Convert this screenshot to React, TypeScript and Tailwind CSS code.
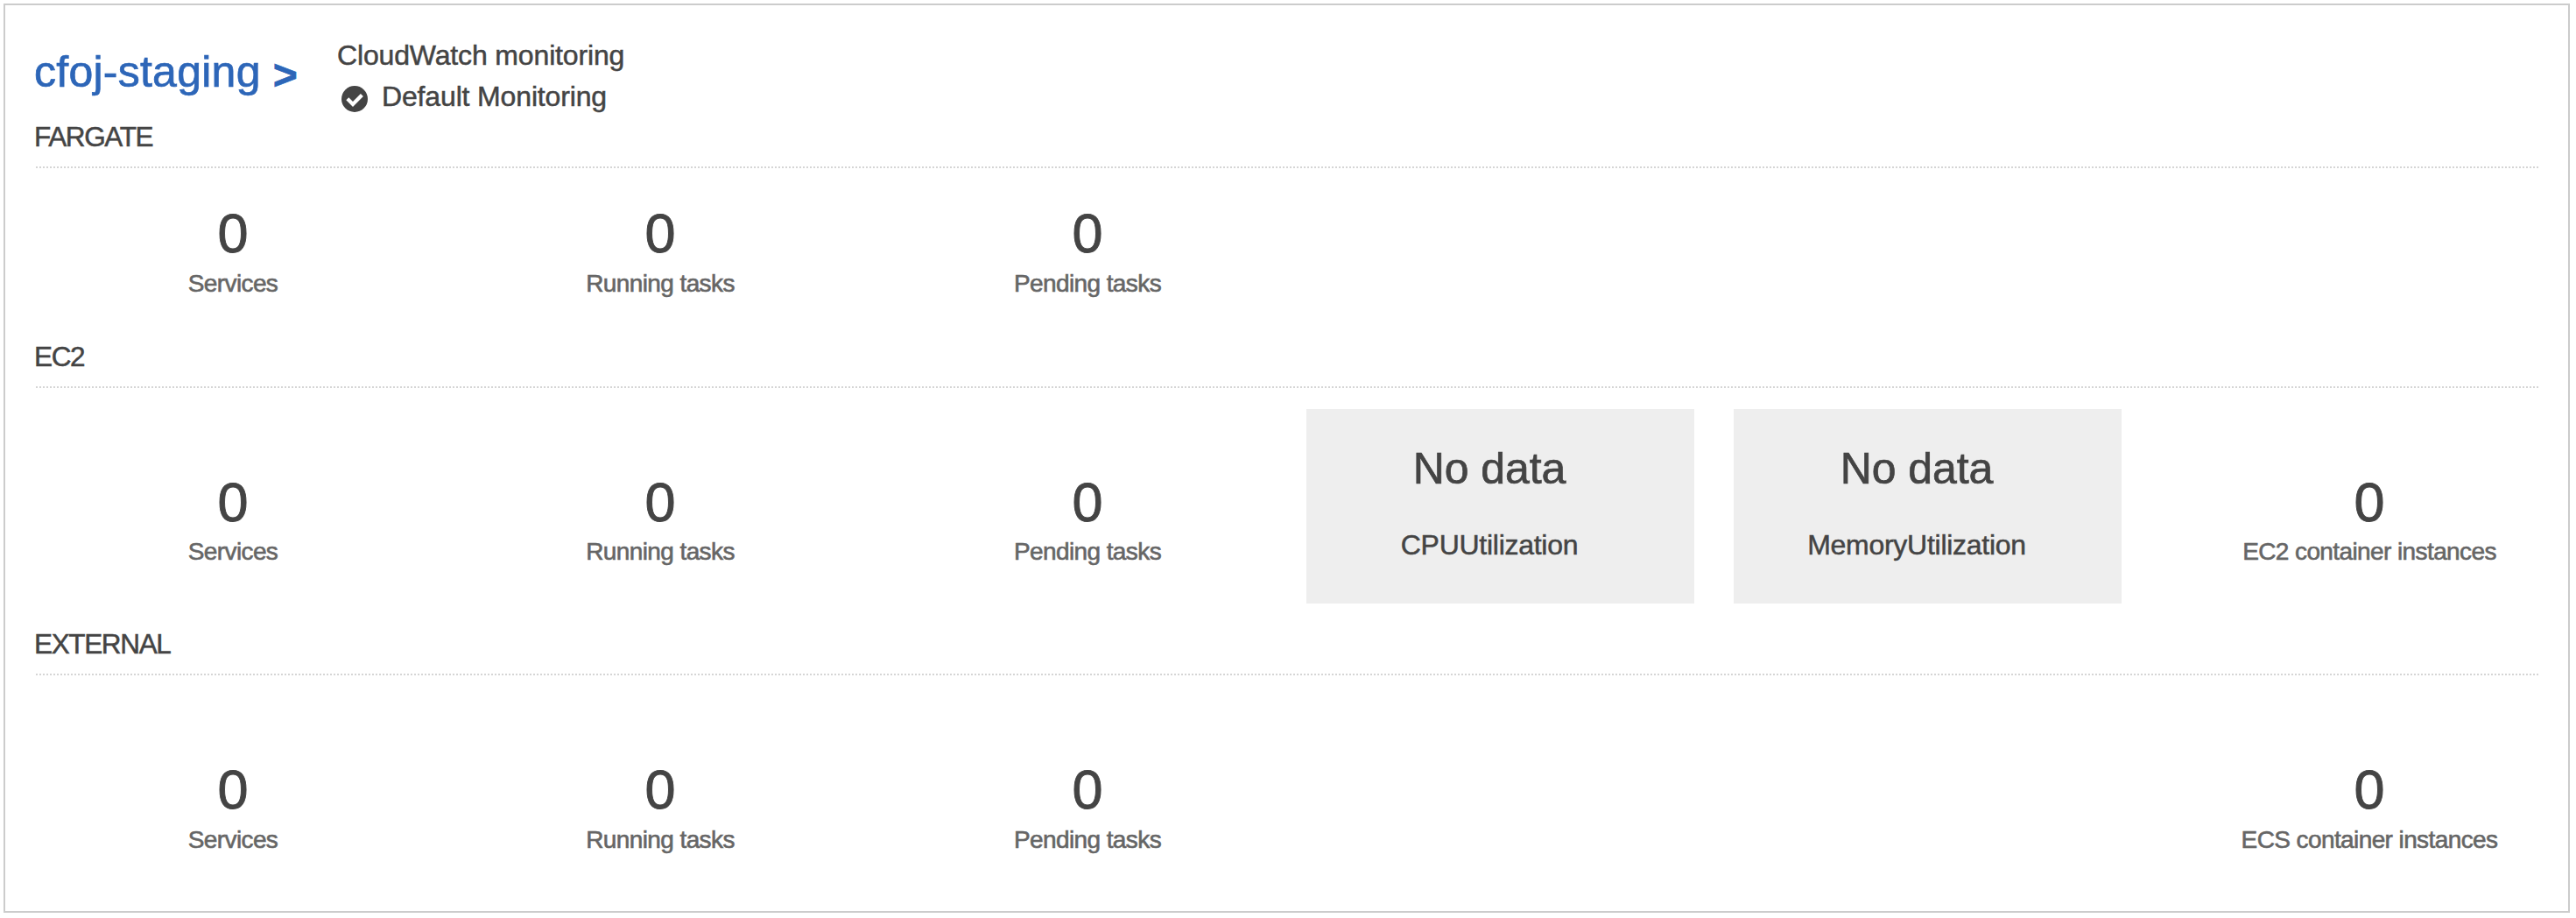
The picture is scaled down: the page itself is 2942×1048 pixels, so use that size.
type Metric = { kind: 'count' | 'chart' | 'empty'; label?: string };

const count = (label: string): Metric => ({ kind: 'count', label });
const tasks = [count('Services'), count('Running tasks'), count('Pending tasks')];
const blank: Metric = { kind: 'empty' };

function Count({ label, offset }: { label: string; offset: string }) {
  return (
    <div className={`flex flex-col items-center ${offset}`}>
      <span className="text-[63px] leading-[64px] [-webkit-text-stroke:0.9px_#444]">0</span>
      <span className="whitespace-nowrap text-[28px] leading-[36px] tracking-[-0.6px] text-[#666] [-webkit-text-stroke:0.6px_#666]">
        {label}
      </span>
    </div>
  );
}

function Chart({ label }: { label: string }) {
  return (
    <div className="mt-6 ml-[6px] flex h-[222px] w-[443px] flex-col items-center bg-[#eee] pt-[38px] pr-[25px]">
      <span className="text-[50px] leading-[60px] tracking-[-0.1px] [-webkit-text-stroke:0.7px_#444]">No data</span>
      <span className="mt-[37px] text-[32px] leading-[40px] tracking-[-0.27px]">{label}</span>
    </div>
  );
}

function Section({ title, metrics, offset, height }: { title: string; metrics: Metric[]; offset: string; height: string }) {
  return (
    <section className={height}>
      <h2 className="pl-[33px] text-[31.5px] leading-[41px] tracking-[-1.35px]">{title}</h2>
      <div className="mt-[13px] mr-[34px] ml-[35px] h-[2px] bg-[repeating-linear-gradient(90deg,#d5d5d5_0_2px,transparent_2px_4px)]" />
      <div className="ml-4 grid grid-cols-[repeat(6,488px)]">
        {metrics.map((m, i) =>
          m.kind === 'count' ? (
            <Count key={i} label={m.label!} offset={offset} />
          ) : m.kind === 'chart' ? (
            <Chart key={i} label={m.label!} />
          ) : (
            <div key={i} />
          ),
        )}
      </div>
    </section>
  );
}

export default function App() {
  return (
    <div className="flex h-[1048px] w-[2942px] bg-white p-1 font-['Liberation_Sans',Arial,sans-serif] text-[#444]">
      <main className="h-[1038px] w-[2931px] border-2 border-[#ccc] [-webkit-text-stroke:0.5px]">
        <header className="flex h-[130px] pl-[33px]">
          <a className="flex w-[346px] gap-[14px] pt-[46px] text-[50px] leading-[60px] text-[#2d66b8] [-webkit-text-stroke:0.7px_#2d66b8]">
            <span className="tracking-[0.25px]">cfoj-staging</span>
            <span className="pt-1 text-[48px] font-bold">&gt;</span>
          </a>
          <div className="pt-[37px] text-[32px] leading-[40px] tracking-[-0.15px]">
            <div>CloudWatch monitoring</div>
            <div className="mt-[7px] flex pl-[5px]">
              <svg className="mt-2 mr-4 h-[30px] w-[30px]" viewBox="0 0 30 30">
                <circle cx="15" cy="15" r="15" fill="#444" />
                <path d="M6.8 14.8 L13 21 L23.4 10.6" fill="none" stroke="#fff" strokeWidth="4.2" />
              </svg>
              <span>Default Monitoring</span>
            </div>
          </div>
        </header>
        <Section title="FARGATE" metrics={[...tasks, blank, blank, blank]} offset="gap-2 pt-[42px]" height="h-[251px]" />
        <Section
          title="EC2"
          metrics={[
            ...tasks,
            { kind: 'chart', label: 'CPUUtilization' },
            { kind: 'chart', label: 'MemoryUtilization' },
            count('EC2 container instances'),
          ]}
          offset="gap-[7px] pt-[98px]"
          height="h-[328px]"
        />
        <Section
          title="EXTERNAL"
          metrics={[...tasks, blank, blank, count('ECS container instances')]}
          offset="gap-2 pt-[98px]"
          height="h-[300px]"
        />
      </main>
    </div>
  );
}
